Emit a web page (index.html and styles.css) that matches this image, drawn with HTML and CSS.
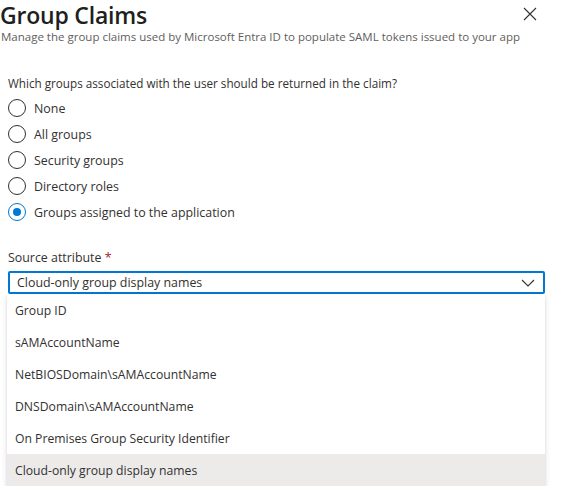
FILE: index.html
```html
<!DOCTYPE html>
<html lang="en">
<head>
<meta charset="utf-8">
<title>Group Claims</title>
<link rel="stylesheet" href="styles.css">
</head>
<body>
<div class="panel">
  <header class="head">
    <h1 class="title">Group Claims</h1>
    <button class="close" aria-label="Close">
      <svg width="14" height="14" viewBox="0 0 14 14"><path d="M1 1 L13 13 M13 1 L1 13" stroke="#323130" stroke-width="1.1" fill="none"/></svg>
    </button>
  </header>
  <p class="sub">Manage the group claims used by Microsoft Entra ID to populate SAML tokens issued to your app</p>
  <section class="content">
    <p class="question">Which groups associated with the user should be returned in the claim?</p>
    <div class="radios">
      <label class="radio"><span class="dot"></span>None</label>
      <label class="radio"><span class="dot"></span>All groups</label>
      <label class="radio"><span class="dot"></span>Security groups</label>
      <label class="radio"><span class="dot"></span>Directory roles</label>
      <label class="radio checked"><span class="dot"></span>Groups assigned to the application</label>
    </div>
    <div class="field-label">Source attribute <span class="req">*</span></div>
    <div class="dropdown">
      <div class="select">
        <span class="value">Cloud-only group display names</span>
        <svg class="chev" width="14" height="8" viewBox="0 0 14 8"><path d="M1 1 L7 7 L13 1" stroke="#323130" stroke-width="1.1" fill="none"/></svg>
      </div>
      <ul class="menu">
        <li class="item">Group ID</li>
        <li class="item">sAMAccountName</li>
        <li class="item">NetBIOSDomain\sAMAccountName</li>
        <li class="item">DNSDomain\sAMAccountName</li>
        <li class="item">On Premises Group Security Identifier</li>
        <li class="item selected">Cloud-only group display names</li>
      </ul>
    </div>
  </section>
</div>
</body>
</html>
```
FILE: styles.css
```css
* { box-sizing: border-box; }
html, body { margin: 0; padding: 0; background: #fff; }
body {
  font-family: "Open Sans", "Noto Sans", "Liberation Sans", sans-serif;
  color: #323130;
  font-size: 12.3px;
}
.panel { width: 561px; }
.head {
  display: flex;
  justify-content: space-between;
  align-items: flex-start;
  height: 28px;
}
.title {
  margin: 0;
  font-size: 23px;
  font-weight: 600;
  line-height: 30px;
  letter-spacing: -0.2px;
  color: #201f1e;
}
.close {
  border: 0;
  background: none;
  padding: 0;
  margin: 7px 24px 0 0;
  width: 14px;
  height: 14px;
  display: flex;
}
.sub {
  margin: 0;
  font-size: 11.5px;
  line-height: 18px;
  color: #605e5c;
  padding-left: 1px;
  white-space: nowrap;
}
.content { padding: 0 0 0 8px; }
.question {
  margin: 28px 0 0 0;
  font-size: 11.7px;
  line-height: 18px;
}
.radios {
  display: flex;
  flex-direction: column;
  margin-top: 3px;
}
.radio {
  display: flex;
  align-items: center;
  height: 26px;
  font-size: 12.4px;
}
.dot {
  width: 18px;
  height: 18px;
  border: 1px solid #323130;
  border-radius: 50%;
  margin-right: 8px;
  display: flex;
  align-items: center;
  justify-content: center;
  flex: none;
}
.checked .dot { border-color: #0078d4; }
.checked .dot::after {
  content: "";
  width: 8px;
  height: 8px;
  border-radius: 50%;
  background: #0078d4;
}
.field-label {
  margin-top: 24px;
  font-size: 12.4px;
  line-height: 18px;
}
.req { color: #a4262c; }
.dropdown { margin-top: 4px; width: 537px; }
.select {
  height: 23px;
  border: 2px solid #0078d4;
  border-radius: 2px;
  display: flex;
  align-items: center;
  justify-content: space-between;
  padding: 0 8px 0 7px;
  font-size: 12.4px;
}
.chev { display: block; }
.menu {
  list-style: none;
  margin: 0 0 0 -1px;
  padding: 0;
  width: 538px;
  background: #fff;
  box-shadow: 0 3px 6px rgba(0,0,0,0.13), 0 1px 2px rgba(0,0,0,0.1);
}
.item {
  height: 32px;
  display: flex;
  align-items: center;
  padding-left: 8px;
  font-size: 12.2px;
}
.item.selected { background: #edebe9; }
```
